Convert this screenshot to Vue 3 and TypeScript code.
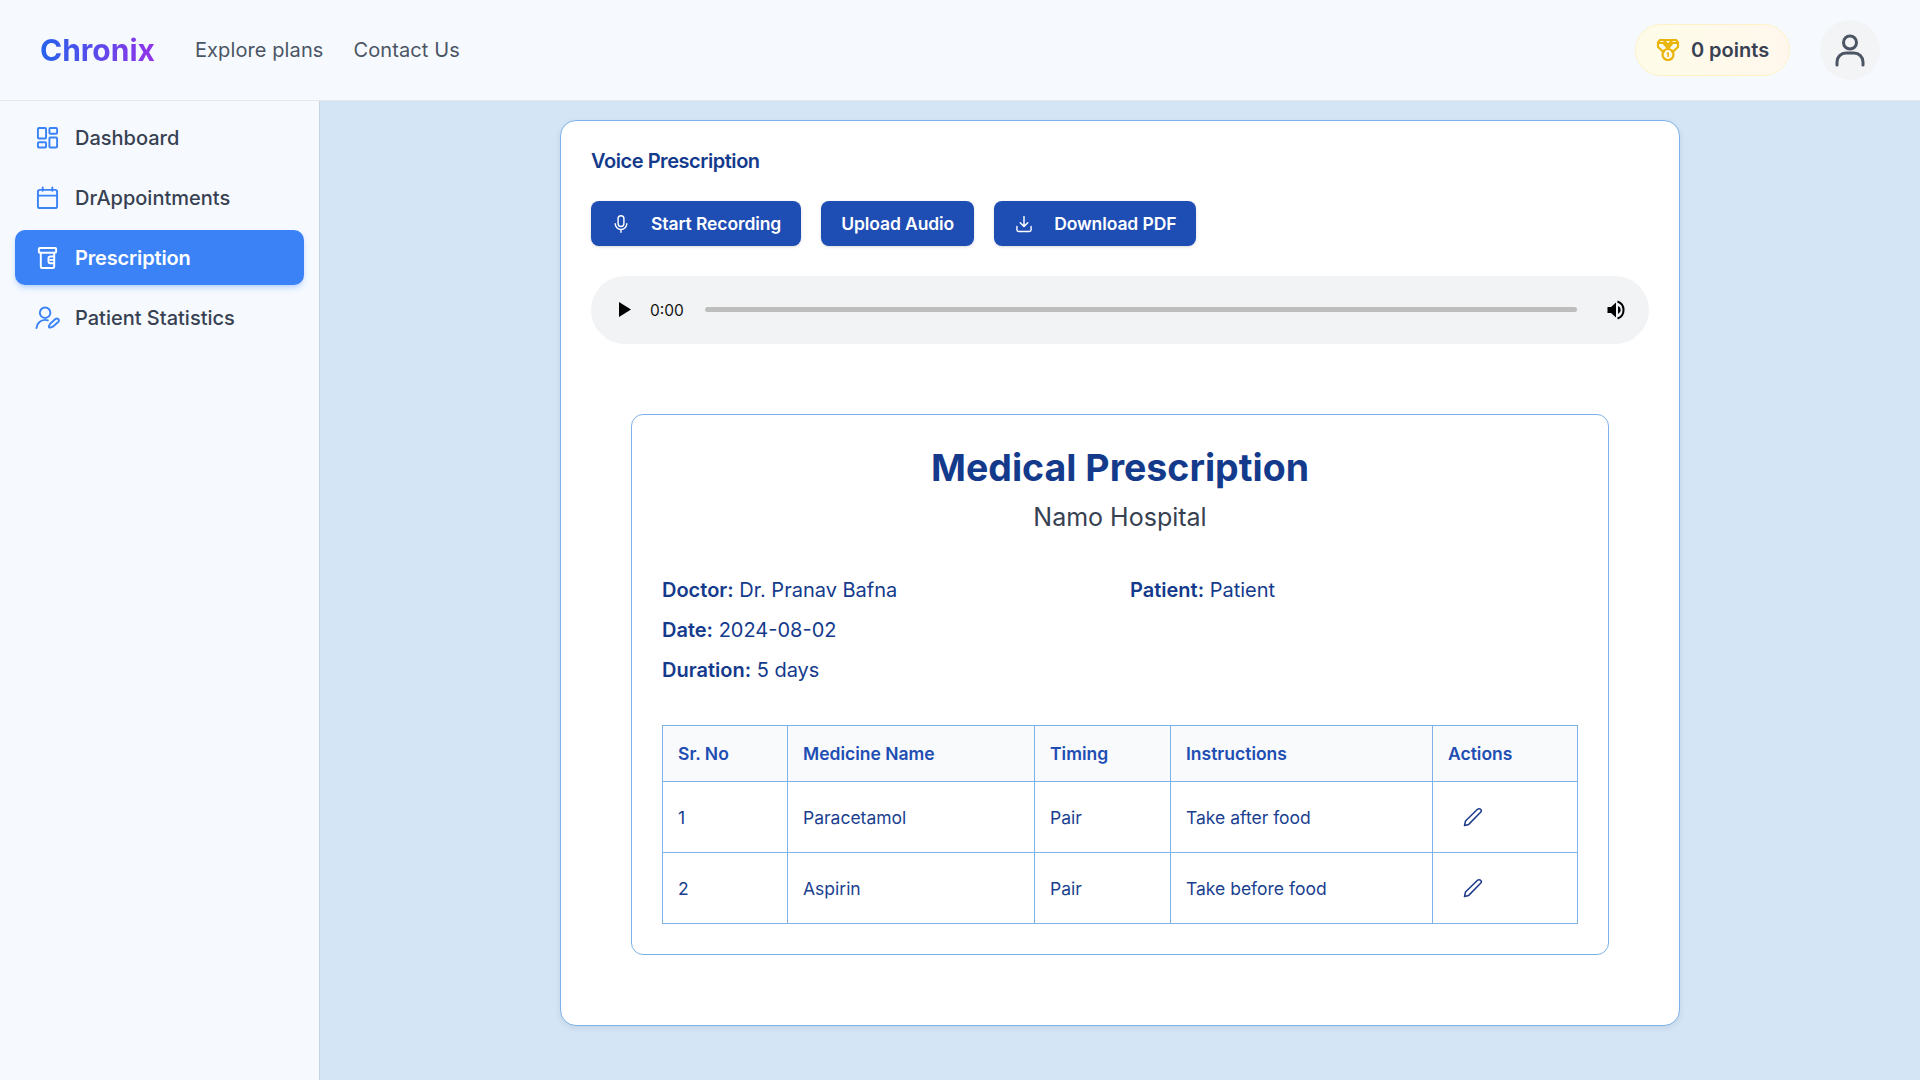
<script setup lang="ts">
interface Row { no: number; name: string; timing: string; note: string }
const rows: Row[] = [
  { no: 1, name: 'Paracetamol', timing: 'Pair', note: 'Take after food' },
  { no: 2, name: 'Aspirin', timing: 'Pair', note: 'Take before food' },
]
</script>

<template>
  <div class="page">
    <header class="topbar">
      <div class="left">
        <span class="logo">Chronix</span>
        <a class="link">Explore plans</a>
        <a class="link">Contact Us</a>
      </div>
      <div class="right">
        <div class="points">
          <svg width="24" height="24" viewBox="0 0 24 24" fill="none" stroke="#eab308" stroke-width="2.200" stroke-linecap="round" stroke-linejoin="round">
            <path d="M7.500 14 2 9V4.500L4 2h16l2 2.500V9l-5.500 5" />
            <path d="M2.500 5h5L12 10.500 16.500 5h5" />
            <path d="M8 2.500 12 7l4-4.500" />
            <circle cx="12" cy="16.500" r="5.500" />
            <path d="M11.300 15.500l.9-.6v3.500" stroke-width="1.500" />
          </svg>
          <span>0 points</span>
        </div>
        <div class="avatar">
          <svg width="36" height="36" viewBox="0 0 36 36" fill="none" stroke="#4b5563" stroke-width="3" stroke-linecap="round">
            <circle cx="18" cy="10.500" r="6.500" />
            <path d="M5 33v-3a9 9 0 0 1 9-9h8a9 9 0 0 1 9 9v3" />
          </svg>
        </div>
      </div>
    </header>

    <div class="body">
      <aside class="sidebar">
        <div class="item">
          <svg class="ic" viewBox="0 0 24 24" fill="none" stroke="currentColor" stroke-width="2" stroke-linejoin="round">
            <rect x="2" y="2" width="8.500" height="11" rx="1" />
            <rect x="14" y="2" width="8" height="6" rx="1" />
            <rect x="14" y="12" width="8" height="10.500" rx="1" />
            <rect x="2" y="17" width="8.500" height="5.500" rx="1" />
          </svg>
          <span>Dashboard</span>
        </div>
        <div class="item">
          <svg class="ic" viewBox="0 0 24 24" fill="none" stroke="currentColor" stroke-width="2" stroke-linecap="round" stroke-linejoin="round">
            <rect x="2" y="4" width="20" height="19" rx="2" />
            <path d="M2 10h20M7 1.500V5M17 1.500V5" />
          </svg>
          <span>DrAppointments</span>
        </div>
        <div class="item active">
          <svg class="ic" viewBox="0 0 24 24" fill="none" stroke="currentColor" stroke-width="2" stroke-linecap="round" stroke-linejoin="round">
            <rect x="3" y="2" width="18" height="5" rx="1" />
            <path d="M5 7v14a2 2 0 0 0 2 2h10a2 2 0 0 0 2-2V7" />
            <path d="M19 11h-4a2 2 0 0 0-2 2v3a2 2 0 0 0 2 2h4M15 14.500h4" />
          </svg>
          <span>Prescription</span>
        </div>
        <div class="item">
          <svg class="ic wide" viewBox="0 0 26 24" fill="none" stroke="currentColor" stroke-width="2" stroke-linecap="round" stroke-linejoin="round">
            <circle cx="10.500" cy="7" r="5.500" />
            <path d="M1.500 23a9 9 0 0 1 9-8.500c1 0 2 .2 2.800.5" />
            <path d="M16 22.500c-1 .3-1.700-.3-1.500-1.300.2-1 .7-2 1.500-2.900l5.300-4.800c1-.8 2.200-.6 3 .2.800.9.700 2.100-.2 3l-5.200 4.600c-.8.500-1.700 1-2.900 1.200Z" />
          </svg>
          <span>Patient Statistics</span>
        </div>
      </aside>

      <main class="main">
        <section class="card">
          <h2 class="title">Voice Prescription</h2>
          <div class="btns">
            <button class="btn">
              <svg class="bi" viewBox="0 0 24 24" fill="none" stroke="currentColor" stroke-width="1.700" stroke-linecap="round" stroke-linejoin="round">
                <rect x="8.500" y="2" width="7" height="13" rx="3.500" />
                <path d="M5 11.500a7 7 0 0 0 14 0M12 18.500V22" />
              </svg>
              <span>Start Recording</span>
            </button>
            <button class="btn plain"><span>Upload Audio</span></button>
            <button class="btn">
              <svg class="bi" viewBox="0 0 24 24" fill="none" stroke="currentColor" stroke-width="1.700" stroke-linecap="round" stroke-linejoin="round">
                <path d="M12 3v12M7.500 10.500 12 15l4.500-4.500" />
                <path d="M3.500 15v4a2 2 0 0 0 2 2h13a2 2 0 0 0 2-2v-4" />
              </svg>
              <span>Download PDF</span>
            </button>
          </div>

          <div class="player">
            <svg class="play" width="12" height="15" viewBox="0 0 12 15"><path d="M0 0 12 7.500 0 15Z" fill="#000" /></svg>
            <span class="time">0:00</span>
            <div class="track"></div>
            <svg class="vol" width="20" height="20" viewBox="0 0 20 20">
              <path d="M0.500 7H4L9 2.500v15L4 13H.5Z" fill="#000" />
              <path d="M10.500 1.500a9 9 0 0 1 0 17" fill="none" stroke="#000" stroke-width="2" />
              <path d="M11 6a4.300 4.300 0 0 1 0 8Z" fill="#000" />
            </svg>
          </div>

          <article class="doc">
            <h1 class="doc-title">Medical Prescription</h1>
            <p class="hospital">Namo Hospital</p>
            <div class="meta">
              <div><b>Doctor:</b> Dr. Pranav Bafna</div>
              <div><b>Patient:</b> Patient</div>
              <div><b>Date:</b> 2024-08-02</div>
              <div></div>
              <div><b>Duration:</b> 5 days</div>
            </div>
            <table class="table">
              <colgroup>
                <col class="c1" />
                <col class="c2" />
                <col class="c3" />
                <col class="c4" />
                <col />
              </colgroup>
              <thead>
                <tr>
                  <th>Sr. No</th>
                  <th>Medicine Name</th>
                  <th>Timing</th>
                  <th>Instructions</th>
                  <th>Actions</th>
                </tr>
              </thead>
              <tbody>
                <tr v-for="r in rows" :key="r.no">
                  <td>{{ r.no }}</td>
                  <td>{{ r.name }}</td>
                  <td>{{ r.timing }}</td>
                  <td>{{ r.note }}</td>
                  <td>
                    <svg class="edit" width="20" height="20" viewBox="0 0 20 20" fill="none" stroke="#1e3a8a" stroke-width="1.500" stroke-linejoin="round">
                      <path d="M1.500 18.500 2.500 14 14.500 2.300c1-.9 2.300-.9 3.100 0 .9.900.9 2.100 0 3L5.700 17.400Z" />
                    </svg>
                  </td>
                </tr>
              </tbody>
            </table>
          </article>
        </section>
      </main>
    </div>
  </div>
</template>

<style>
html, body { margin: 0; padding: 0; }
</style>

<style scoped>
.page { width: 1920px; height: 1080px; display: flex; flex-direction: column; font-family: Inter, "Liberation Sans", sans-serif; overflow: hidden; background: #d4e5f5; }
.topbar { height: 100px; flex: none; border-bottom: 1px solid #e5e7eb; background: #f6faff; display: flex; align-items: center; justify-content: space-between; padding: 0 40px; }
.left { display: flex; align-items: center; }
.logo { font-size: 30px; font-weight: 700; background: linear-gradient(90deg, #2563eb, #9333ea); -webkit-background-clip: text; background-clip: text; color: transparent; margin-right: 40px; }
.link { font-size: 20px; letter-spacing: 0.1px; color: #4b5563; margin-right: 30px; }
.right { display: flex; align-items: center; gap: 30px; }
.points { width: 155px; height: 52px; box-sizing: border-box; border: 1px solid #fef3c7; border-radius: 26px; background: linear-gradient(90deg, #fefce8, #fff7ed); display: flex; align-items: center; justify-content: center; gap: 11px; font-size: 20px; font-weight: 600; color: #374151; }
.avatar { width: 60px; height: 60px; border-radius: 50%; background: #f3f4f6; display: flex; align-items: center; justify-content: center; }
.body { flex: 1; display: flex; min-height: 0; }
.sidebar { width: 320px; flex: none; box-sizing: border-box; background: #f6faff; border-right: 1px solid #c5d6e6; padding: 9px 15px; display: flex; flex-direction: column; gap: 5px; }
.item { height: 55px; display: flex; align-items: center; gap: 16px; padding-left: 21px; border-radius: 10px; font-size: 20px; font-weight: 500; color: #374151; }
.item .ic { width: 23px; height: 23px; color: #3b82f6; flex: none; }
.item .ic.wide { width: 25px; margin-left: -1px; margin-right: -1px; }
.item.active { background: #3b82f6; color: #fff; font-weight: 600; letter-spacing: -0.15px; box-shadow: 0 4px 6px -1px rgba(59,130,246,.25), 0 2px 4px -2px rgba(59,130,246,.25); }
.item.active .ic { color: #fff; }
.main { flex: 1; padding-top: 19px; display: flex; justify-content: center; align-items: flex-start; }
.card { width: 1120px; height: 906px; box-sizing: border-box; background: #fff; border: 1px solid #7fb2e8; border-radius: 16px; padding: 30px; box-shadow: 0 2px 6px rgba(0,0,0,.08); }
.title { margin: 0 0 30px; font-size: 20px; line-height: 20px; font-weight: 600; letter-spacing: -0.45px; color: #143a8c; }
.btns { display: flex; gap: 20px; }
.btn { height: 45px; border: 0; border-radius: 8px; background: #1e4db4; color: #fff; font: 600 17.5px Inter, "Liberation Sans", sans-serif; letter-spacing: -0.1px; padding: 0 20px; display: flex; align-items: center; gap: 20px; box-shadow: 0 1px 3px rgba(0,0,0,.15); }
.bi { width: 20px; height: 20px; flex: none; }
.player { margin-top: 30px; height: 68px; border-radius: 34px; background: #f1f3f5; display: flex; align-items: center; padding: 0 22px 0 28px; }
.play { margin-bottom: 1px; }
.time { font: 400 15.500px Inter, "Liberation Sans", sans-serif; color: #111; margin-left: 19px; }
.track { flex: 1; height: 5px; margin: 0 30px 1px 21px; border-radius: 3px; background: #bdbdbd; }
.doc { margin: 70px 40px 0; height: 541px; box-sizing: border-box; border: 1px solid #7fb2e8; border-radius: 12px; padding: 30px; }
.doc-title { margin: 0; text-align: center; font-size: 37.500px; line-height: 46px; font-weight: 700; color: #143a8c; }
.hospital { margin: 10px 0 0; text-align: center; font-size: 25px; line-height: 32px; color: #374151; }
.meta { margin-top: 43px; display: grid; grid-template-columns: 1fr 1fr; column-gap: 20px; row-gap: 12px; font-size: 20px; line-height: 28px; color: #143a8c; }
.meta b { font-weight: 600; }
.table { margin-top: 41px; width: 100%; border-collapse: collapse; table-layout: fixed; font-size: 17.500px; }
.c1 { width: 125px; }
.c2 { width: 247px; }
.c3 { width: 136px; }
.c4 { width: 262px; }
.table th, .table td { border: 1px solid #7fb2e8; padding: 0 15px; text-align: left; }
.table th { height: 55px; background: #f9fafb; font-weight: 600; color: #1e4db4; }
.table td { height: 70px; font-weight: 400; color: #1a3f8f; }
.edit { display: block; margin-left: 15px; }
</style>
